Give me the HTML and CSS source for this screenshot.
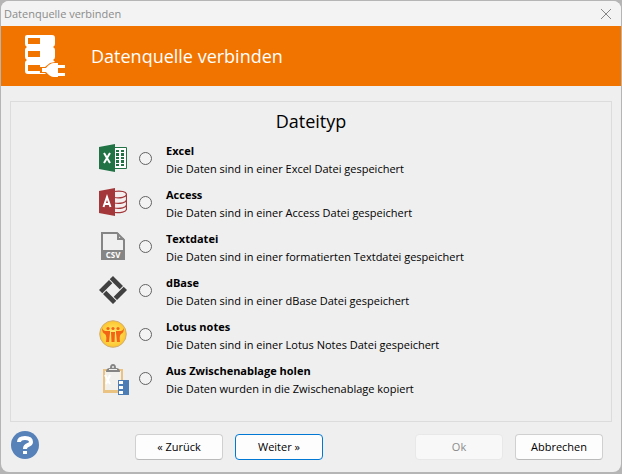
FILE: index.html
```html
<!DOCTYPE html>
<html lang="de">
<head>
<meta charset="utf-8">
<meta name="viewport" content="width=device-width, initial-scale=1">
<title>Datenquelle verbinden</title>
<link rel="stylesheet" href="styles.css">
</head>
<body>
<form class="dialog">
  <header class="titlebar">
    <span>Datenquelle verbinden</span>
    <button type="button" class="close" aria-label="Schließen">
      <svg width="12" height="12" viewBox="0 0 12 12"><path d="M1 1l10 10M11 1L1 11" fill="none" stroke="#858585"/></svg>
    </button>
  </header>
  <div class="banner">
    <svg class="banner-icon" width="42" height="44" viewBox="0 0 42 44">
      <path fill="#fff" d="M3 1h25q3 0 3 3v6q0 2-2 3 2 1 2 3v7q0 2-2 3 2 1 2 3v8q0 3-3 3H4q-3 0-3-3v-8q0-2 2-3-2-1-2-3v-7q0-2 2-3-2-1-2-3V3q0-2 2-2z"/>
      <path fill="#f27400" d="M4 4h12v6H4zM4 17h12v6H4zM4 31h12v6H4zM16 33h5l5-4 5-1h11v16H26l-5-5h-5z"/>
      <path fill="#fff" d="M18 34h4q4-5 8-5h4v2h7v3h-7v5h7v3h-7v1h-4q-4 0-8-5h-4z"/>
    </svg>
    <h1>Datenquelle verbinden</h1>
  </div>
  <fieldset class="panel">
    <h2>Dateityp</h2>
    <div class="options">
      <label class="option">
        <svg width="28" height="28" viewBox="0 0 28 28">
          <path fill="#fff" stroke="#217346" d="M14 3.500h13.500v21H14z"/>
          <path fill="#217346" d="M17 6h3v2h-3zM22 6h3v2h-3zM17 9h3v3h-3zM22 9h3v3h-3zM17 13h3v2h-3zM22 13h3v2h-3zM17 16h3v3h-3zM22 16h3v3h-3zM17 20h3v2h-3zM22 20h3v2h-3zM0 3l16-3v28L0 25z"/>
          <path fill="none" stroke="#fff" stroke-width="2" d="M5 9l6 10M11 9L5 19"/>
        </svg>
        <input type="radio" name="dateityp">
        <span class="text"><strong>Excel</strong><span>Die Daten sind in einer Excel Datei gespeichert</span></span>
      </label>
      <label class="option">
        <svg width="28" height="28" viewBox="0 0 28 28">
          <path fill="#f4eeee" stroke="#a4373a" stroke-width="1.200" d="M15 3.500c7-1 12.500 0 12.500 3v14.500c0 3-6 4-12.500 3.500z"/>
          <path fill="none" stroke="#a4373a" stroke-width="1.200" d="M15 9.500c7 1 12-.5 12.500-3M15 15c7 1 12-.5 12.500-3M15 20c7 1 12-.5 12.500-3"/>
          <path fill="#a4373a" d="M0 3l16-3v28L0 25z"/>
          <path fill="none" stroke="#fff" stroke-width="2" d="M4.500 19L8 9l3.500 10M6 16h4"/>
        </svg>
        <input type="radio" name="dateityp">
        <span class="text"><strong>Access</strong><span>Die Daten sind in einer Access Datei gespeichert</span></span>
      </label>
      <label class="option">
        <svg width="28" height="28" viewBox="0 0 28 28">
          <path fill="none" stroke="#858585" stroke-width="2" d="M3 20V1h15l7 7v12M19 1v6h6"/>
          <path fill="#858585" d="M2 18h24v10H2z"/>
          <text class="csv" x="14" y="26" text-anchor="middle">CSV</text>
        </svg>
        <input type="radio" name="dateityp">
        <span class="text"><strong>Textdatei</strong><span>Die Daten sind in einer formatierten Textdatei gespeichert</span></span>
      </label>
      <label class="option">
        <svg width="28" height="28" viewBox="0 0 28 28">
          <path fill="#414141" d="M10.700 3.300l3.300-3.300 10 10-3.300 3.300zM24.700 10.700l3.300 3.300-10 10-3.300-3.300zM17.300 24.700l-3.300 3.300-10-10 3.300-3.300zM3.300 17.300L0 14 10 4l3.300 3.300z"/>
        </svg>
        <input type="radio" name="dateityp">
        <span class="text"><strong>dBase</strong><span>Die Daten sind in einer dBase Datei gespeichert</span></span>
      </label>
      <label class="option">
        <svg width="28" height="28" viewBox="0 0 28 28">
          <defs><radialGradient id="sun"><stop offset="0" stop-color="#ffef78"/><stop offset="1" stop-color="#fdc52c"/></radialGradient></defs>
          <circle cx="14" cy="14" r="13.300" fill="url(#sun)" stroke="#d1ad77"/>
          <g fill="#f26514"><circle cx="9" cy="8.500" r="1.600"/><circle cx="14" cy="8.500" r="1.600"/><circle cx="19" cy="8.500" r="1.600"/></g>
          <path fill="#f26514" d="M3 8q1 3 3 3h5v2l-1 9H7q1-6-1-8-3-1-3-6zM25 8q-1 3-3 3h-5v2l1 9h3q-1-6 1-8 3-1 3-6zM12 12h4l-.5 10h-3z"/>
        </svg>
        <input type="radio" name="dateityp">
        <span class="text"><strong>Lotus notes</strong><span>Die Daten sind in einer Lotus Notes Datei gespeichert</span></span>
      </label>
      <label class="option">
        <svg class="clipboard" width="32" height="32" viewBox="0 0 32 32">
          <path fill="#eac282" d="M4 5h20v24H4z"/>
          <path fill="#f1f0ed" d="M6 7h16v19H6z"/>
          <path fill="none" stroke="#fff" stroke-width="2" d="M6 11l5 9M11 11l-4 9"/>
          <path fill="#858585" d="M7 8q0-4 4-4 0-4 3-4t3 4q4 0 4 4z"/>
          <circle cx="14" cy="3" r="1" fill="#efefef"/><path fill="#efefef" d="M10 5h8v1h-8z"/>
          <path fill="#4d7db5" d="M19 16h11v15H19z"/>
          <path fill="#fff" d="M20 17h4v3h-4zM20 22h4v3h-4zM20 27h4v3h-4z"/>
        </svg>
        <input type="radio" name="dateityp">
        <span class="text"><strong>Aus Zwischenablage holen</strong><span>Die Daten wurden in die Zwischenablage kopiert</span></span>
      </label>
    </div>
  </fieldset>
  <footer class="footer">
    <button type="button" class="help" aria-label="Hilfe">
      <svg width="28" height="28" viewBox="0 0 28 28"><circle cx="14" cy="14" r="14" fill="#5681b9"/><path fill="none" stroke="#fff" stroke-width="4" d="M8 11q0-4 6-4t6 4q0 2-3 3-3 1-3 4"/><path fill="#fff" d="M12 20h4v3h-4z"/></svg>
    </button>
    <div class="group">
      <button type="button" class="btn">« Zurück</button>
      <button type="submit" class="btn primary">Weiter »</button>
    </div>
    <div class="group end">
      <button type="button" class="btn" disabled>Ok</button>
      <button type="button" class="btn">Abbrechen</button>
    </div>
  </footer>
</form>
</body>
</html>
```
FILE: styles.css
```css
* { box-sizing: border-box; }
body {
  margin: 0;
  padding: 1px 1px 2px;
  background: #b5b5b5;
  color: #000;
  font: 11px/18px "Open Sans", "Noto Sans", sans-serif;
}
button { font: inherit; color: inherit; }
.dialog {
  display: flex;
  flex-direction: column;
  min-height: calc(100vh - 3px);
  border-radius: 8px;
  overflow: hidden;
  background: #efefef;
}
.titlebar {
  display: flex;
  align-items: center;
  justify-content: space-between;
  height: 25px;
  padding: 0 9px 0 3px;
  background: #f3f3f3;
  color: #8b8b8b;
}
.close {
  display: flex;
  padding: 0;
  border: 0;
  background: none;
}
.banner {
  display: flex;
  align-items: center;
  gap: 25px;
  height: 60px;
  padding: 0 23px;
  background: #f27400;
  color: #fff;
}
h1, h2 { margin: 0; font-weight: 400; font-size: 18px; line-height: 24px; }
.banner-icon { flex: none; }
.panel {
  flex: 1;
  margin: 15px 9px 0;
  padding: 7px 16px 12px 88px;
  border: 1px solid #dcdcdc;
}
h2 { margin-left: -72px; text-align: center; }
.options { display: grid; gap: 8px; margin-top: 7px; }
.option { display: flex; align-items: flex-start; height: 36px; }
.option svg { flex: none; margin-top: 4px; }
.option .clipboard { margin-right: -4px; }
.option input {
  appearance: none;
  flex: none;
  width: 13px;
  height: 13px;
  margin: 12px 14px 0 12px;
  border: 1px solid #626262;
  border-radius: 50%;
  background: #f3f3f3;
}
.option input:checked { border: 4px solid #0078d4; }
.text { display: flex; flex-direction: column; padding-top: 2px; }
.csv { font: 700 8px "Open Sans", sans-serif; fill: #fff; }
.footer {
  display: flex;
  align-items: flex-start;
  padding: 9px 18px 12px 10px;
}
.help { display: flex; padding: 0; border: 0; background: none; }
.group { display: flex; gap: 12px; margin: 3px 0 0 96px; }
.end { margin-left: auto; }
.btn {
  width: 88px;
  height: 26px;
  padding: 0;
  border: 1px solid #d0d0d0;
  border-bottom-color: #bababa;
  border-radius: 4px;
  background: #fdfdfd;
}
.primary { border-color: #0078d4; }
.btn:disabled { border-color: #e8e8e8; background: #f8f8f8; color: #8b8b8b; }
```
